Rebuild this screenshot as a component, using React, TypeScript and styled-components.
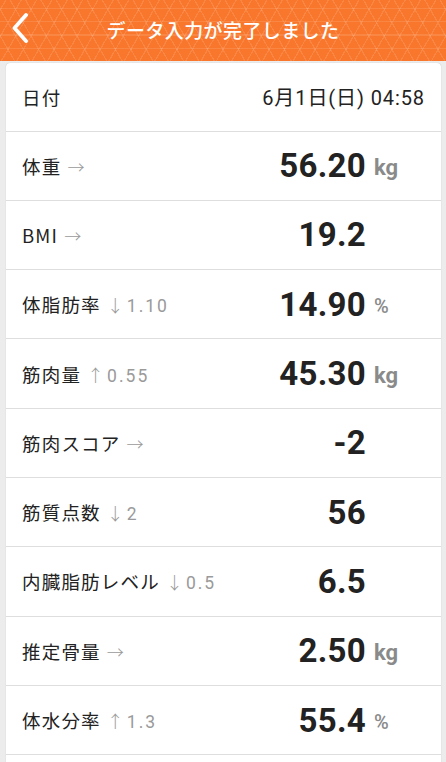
import styled, { createGlobalStyle } from 'styled-components';

const GlobalStyle = createGlobalStyle`
  html, body {
    margin: 0;
    padding: 0;
    background: #ececec;
    font-family: Roboto, "Noto Sans CJK JP", sans-serif;
    -webkit-font-smoothing: antialiased;
  }
`;

const lattice = (angle: string) =>
  `repeating-linear-gradient(${angle}, rgba(255, 255, 255, 0) 0 12.1px, rgba(255, 255, 255, 0.11) 12.1px 13.3px)`;

const Header = styled.header`
  height: 61px;
  display: flex;
  align-items: center;
  justify-content: center;
  position: relative;
  background-color: #f9772c;
  background-image: ${lattice('0deg')}, ${lattice('60deg')}, ${lattice('-60deg')};
`;

const BackButton = styled.button`
  position: absolute;
  left: 7px;
  top: 12px;
  width: 26px;
  height: 32px;
  padding: 0;
  border: none;
  background: none;
  display: flex;
  align-items: center;
  justify-content: center;
`;

const Title = styled.h1`
  margin: 0 0 3px;
  color: #fff;
  font-size: 19px;
  font-weight: 500;
  letter-spacing: 0.4px;
  font-family: "Noto Sans CJK JP", sans-serif;
`;

const Card = styled.main`
  margin: 2px 5px 0 6px;
  padding-bottom: 40px;
  background: #fff;
  border-radius: 4px 4px 0 0;
  box-shadow: 0 0 1px rgba(0, 0, 0, 0.25);
`;

const DateRow = styled.div`
  height: 67.5px;
  display: flex;
  align-items: center;
  justify-content: space-between;
  padding: 0 16px 0 16px;
  border-bottom: 1px solid #dedede;
`;

const DateValue = styled.span`
  font-size: 20px;
  letter-spacing: 0.9px;
  color: #222;
  font-family: Roboto, "Noto Sans CJK JP", sans-serif;
`;

const Row = styled.div`
  height: 68.3px;
  display: grid;
  grid-template-columns: 1fr 130px 50px;
  column-gap: 8px;
  align-items: center;
  padding: 0 17px 0 16px;
  border-bottom: 1px solid #dedede;
`;

const Label = styled.div`
  display: flex;
  align-items: baseline;
  gap: 6px;
  font-size: 18.5px;
  letter-spacing: 1.2px;
  color: #222;
  font-family: "Noto Sans CJK JP", sans-serif;
  white-space: nowrap;
`;

const Trend = styled.span`
  font-family: "Noto Sans CJK JP", sans-serif;
  font-weight: 300;
  font-size: 17px;
  color: #9a9a9a;
  letter-spacing: 0;
`;

const Delta = styled.span`
  margin-left: 3px;
  font-family: Roboto, sans-serif;
  font-size: 17.5px;
  color: #9a9a9a;
  letter-spacing: 2px;
`;

const Number = styled.div`
  text-align: right;
  font-size: 33px;
  font-weight: 700;
  color: #222;
  letter-spacing: 0.3px;
  line-height: 1;
`;

const Unit = styled.div<{ $percent?: boolean }>`
  font-size: ${p => (p.$percent ? '20px' : '22px')};
  font-weight: ${p => (p.$percent ? 500 : 700)};
  color: #8a8a8a;
  padding-top: 4px;
`;

type Metric = {
  label: string;
  trend: '→' | '↓' | '↑';
  delta?: string;
  value: string;
  unit?: string;
};

const metrics: Metric[] = [
  { label: '体重', trend: '→', value: '56.20', unit: 'kg' },
  { label: 'BMI', trend: '→', value: '19.2' },
  { label: '体脂肪率', trend: '↓', delta: '1.10', value: '14.90', unit: '%' },
  { label: '筋肉量', trend: '↑', delta: '0.55', value: '45.30', unit: 'kg' },
  { label: '筋肉スコア', trend: '→', value: '-2' },
  { label: '筋質点数', trend: '↓', delta: '2', value: '56' },
  { label: '内臓脂肪レベル', trend: '↓', delta: '0.5', value: '6.5' },
  { label: '推定骨量', trend: '→', value: '2.50', unit: 'kg' },
  { label: '体水分率', trend: '↑', delta: '1.3', value: '55.4', unit: '%' },
];

const Chevron = () => (
  <svg width="18" height="30" viewBox="0 0 18 30">
    <path d="M15 2 L3.5 15 L15 28" fill="none" stroke="#fff" strokeWidth="3.8" strokeLinecap="round" strokeLinejoin="round" />
  </svg>
);

export default function App() {
  return (
    <>
      <GlobalStyle />
      <Header>
        <BackButton aria-label="戻る">
          <Chevron />
        </BackButton>
        <Title>データ入力が完了しました</Title>
      </Header>
      <Card>
        <DateRow>
          <Label>日付</Label>
          <DateValue>6月1日(日) 04:58</DateValue>
        </DateRow>
        {metrics.map(m => (
          <Row key={m.label}>
            <Label>
              {m.label}
              <span>
                <Trend>{m.trend}</Trend>
                {m.delta && <Delta>{m.delta}</Delta>}
              </span>
            </Label>
            <Number>{m.value}</Number>
            <Unit $percent={m.unit === '%'}>{m.unit}</Unit>
          </Row>
        ))}
      </Card>
    </>
  );
}
